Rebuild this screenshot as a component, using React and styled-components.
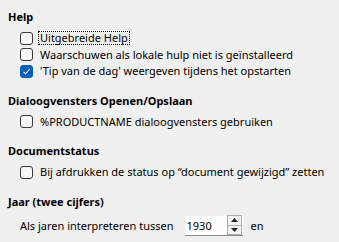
import styled, { createGlobalStyle } from "styled-components";

const GlobalStyle = createGlobalStyle`
  html, body {
    margin: 0;
    padding: 0;
    background: #f0f0f0;
  }
  body {
    font-family: "Noto Sans", "Open Sans", sans-serif;
    font-size: 11px;
    color: #000;
  }
`;

const Page = styled.div`
  width: 339px;
  height: 242px;
  padding: 9px 0 0 8px;
  box-sizing: border-box;
  display: flex;
  flex-direction: column;
  gap: 13px;
`;

const Section = styled.section`
  display: flex;
  flex-direction: column;
`;

const Heading = styled.div`
  font-weight: 700;
  line-height: 16px;
  margin-bottom: 5px;
`;

const Body = styled.div`
  display: flex;
  flex-direction: column;
  padding-left: 12px;
`;

const CheckRow = styled.label`
  display: flex;
  align-items: center;
  gap: 5px;
  height: 16.5px;
  white-space: nowrap;
`;

const Box = styled.span`
  width: 11px;
  height: 11px;
  border: 1px solid ${(p) => (p.$checked ? "#005fb8" : "#3a3a3a")};
  border-radius: 3px;
  background: ${(p) => (p.$checked ? "#005fb8" : "#f7f7f7")};
  display: flex;
  align-items: center;
  justify-content: center;
  flex-shrink: 0;
`;

const Label = styled.span`
  padding: 0 1px;
  border: 1px dotted ${(p) => (p.$focused ? "#000" : "transparent")};
  line-height: 12px;
`;

const SpinRow = styled.div`
  display: flex;
  align-items: center;
  height: 22px;
`;

const SpinField = styled.div`
  margin-left: 11px;
  width: 58px;
  height: 20px;
  background: #fff;
  border-bottom: 1px solid #8a8a8a;
  display: flex;
  align-items: center;
  box-sizing: border-box;
`;

const SpinValue = styled.span`
  flex: 1;
  padding-left: 2px;
`;

const SpinButtons = styled.div`
  width: 13px;
  height: 18px;
  margin-right: 1px;
  display: flex;
  flex-direction: column;
  border: 1px solid #adadad;
  background: #f3f3f3;
`;

const SpinBtn = styled.div`
  flex: 1;
  display: flex;
  align-items: center;
  justify-content: center;
  & + & {
    border-top: 1px solid #adadad;
  }
`;

const After = styled.span`
  margin-left: 8px;
`;

const Check = ({ checked, focused, children }) => (
  <CheckRow>
    <Box $checked={checked}>
      {checked && (
        <svg width="9" height="9" viewBox="0 0 9 9">
          <path d="M1.5 4.8 L3.6 6.8 L7.6 2.2" fill="none" stroke="#fff" strokeWidth="1.1" />
        </svg>
      )}
    </Box>
    <Label $focused={focused}>{children}</Label>
  </CheckRow>
);

export default function App() {
  return (
    <>
      <GlobalStyle />
      <Page>
        <Section>
          <Heading>Help</Heading>
          <Body>
            <Check focused>Uitgebreide Help</Check>
            <Check>Waarschuwen als lokale hulp niet is geïnstalleerd</Check>
            <Check checked>'Tip van de dag' weergeven tijdens het opstarten</Check>
          </Body>
        </Section>
        <Section>
          <Heading>Dialoogvensters Openen/Opslaan</Heading>
          <Body>
            <Check>%PRODUCTNAME dialoogvensters gebruiken</Check>
          </Body>
        </Section>
        <Section>
          <Heading>Documentstatus</Heading>
          <Body>
            <Check>Bij afdrukken de status op “document gewijzigd” zetten</Check>
          </Body>
        </Section>
        <Section>
          <Heading>Jaar (twee cijfers)</Heading>
          <Body>
            <SpinRow>
              <span>Als jaren interpreteren tussen</span>
              <SpinField>
                <SpinValue>1930</SpinValue>
                <SpinButtons>
                  <SpinBtn>
                    <svg width="7" height="4" viewBox="0 0 7 4">
                      <path d="M0 4 L3.5 0 L7 4 Z" fill="#222" />
                    </svg>
                  </SpinBtn>
                  <SpinBtn>
                    <svg width="7" height="4" viewBox="0 0 7 4">
                      <path d="M0 0 L3.5 4 L7 0 Z" fill="#222" />
                    </svg>
                  </SpinBtn>
                </SpinButtons>
              </SpinField>
              <After>en</After>
            </SpinRow>
          </Body>
        </Section>
      </Page>
    </>
  );
}
